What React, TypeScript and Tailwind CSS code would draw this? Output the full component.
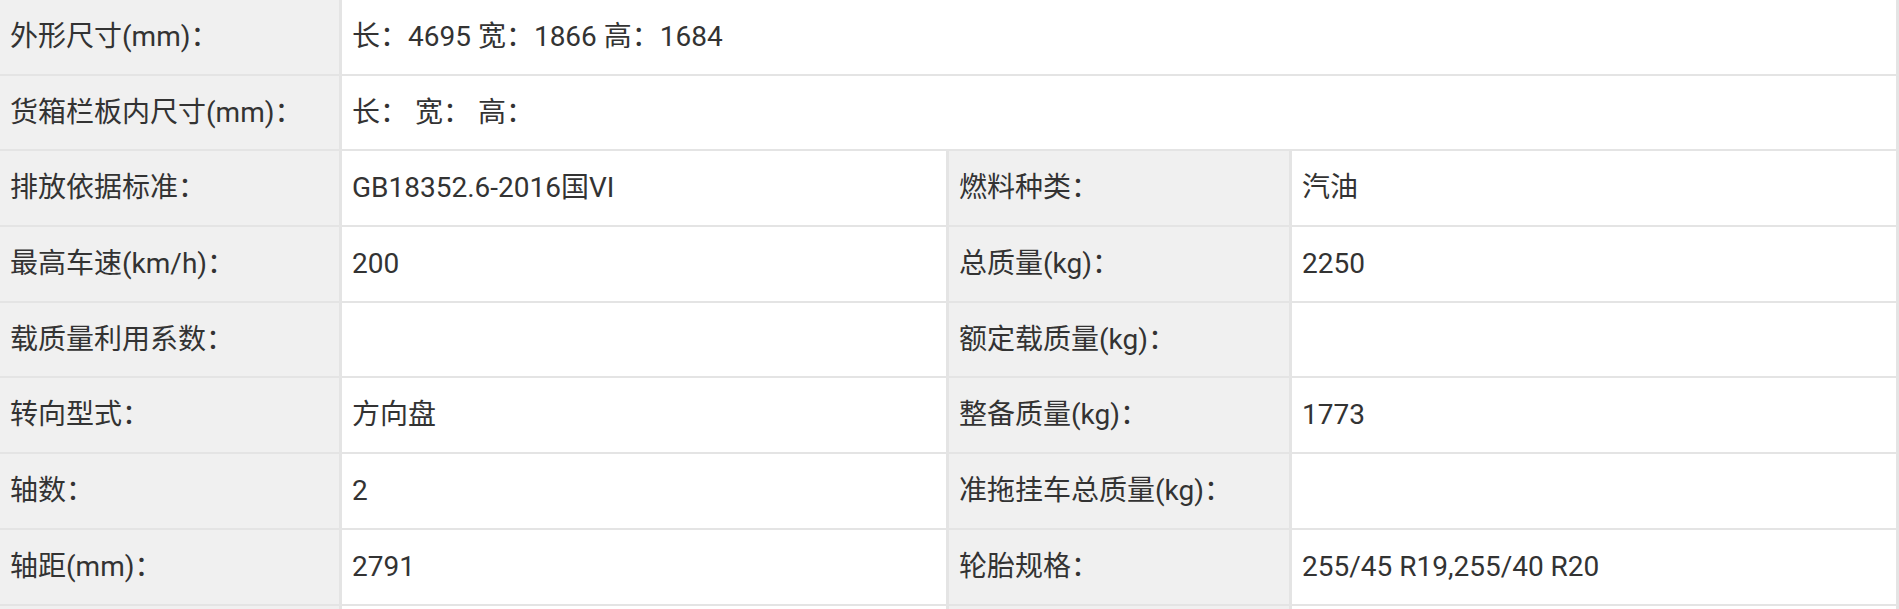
import React from "react";

type Row =
  | { kind: "wide"; label: string; value: string }
  | { kind: "pair"; l1: string; v1: string; l2: string; v2: string };

const rows: Row[] = [
  { kind: "wide", label: "外形尺寸(mm)：", value: "长：4695 宽：1866 高：1684" },
  { kind: "wide", label: "货箱栏板内尺寸(mm)：", value: "长： 宽： 高：" },
  { kind: "pair", l1: "排放依据标准：", v1: "GB18352.6-2016国VI", l2: "燃料种类：", v2: "汽油" },
  { kind: "pair", l1: "最高车速(km/h)：", v1: "200", l2: "总质量(kg)：", v2: "2250" },
  { kind: "pair", l1: "载质量利用系数：", v1: "", l2: "额定载质量(kg)：", v2: "" },
  { kind: "pair", l1: "转向型式：", v1: "方向盘", l2: "整备质量(kg)：", v2: "1773" },
  { kind: "pair", l1: "轴数：", v1: "2", l2: "准拖挂车总质量(kg)：", v2: "" },
  { kind: "pair", l1: "轴距(mm)：", v1: "2791", l2: "轮胎规格：", v2: "255/45 R19,255/40 R20" },
  { kind: "pair", l1: "", v1: "", l2: "", v2: "" },
];

const labelCls =
  "flex items-center pl-[10px] bg-[#f0f0f0] border-r-[3px] border-[#e4e4e4] whitespace-nowrap";
const valueCls =
  "flex items-center pl-[10px] bg-white border-r-[3px] border-[#e4e4e4] whitespace-pre";

export default function App() {
  return (
    <div
      className="w-[1899px] h-[609px] overflow-hidden bg-white text-[28px] text-[#333333] leading-none"
      style={{ fontFamily: 'Roboto, "Noto Sans CJK SC", sans-serif' }}
    >
      {rows.map((r, i) => (
        <div
          key={i}
          className="flex h-[75.7px] shrink-0 border-b-2 border-[#e4e4e4]"
        >
          {r.kind === "wide" ? (
            <>
              <div className={`${labelCls} w-[342px]`}>{r.label}</div>
              <div className={`${valueCls} w-[1557px]`}>{r.value}</div>
            </>
          ) : (
            <>
              <div className={`${labelCls} w-[342px]`}>{r.l1}</div>
              <div className={`${valueCls} w-[607px]`}>{r.v1}</div>
              <div className={`${labelCls} w-[343px]`}>{r.l2}</div>
              <div className={`${valueCls} w-[607px]`}>{r.v2}</div>
            </>
          )}
        </div>
      ))}
    </div>
  );
}
